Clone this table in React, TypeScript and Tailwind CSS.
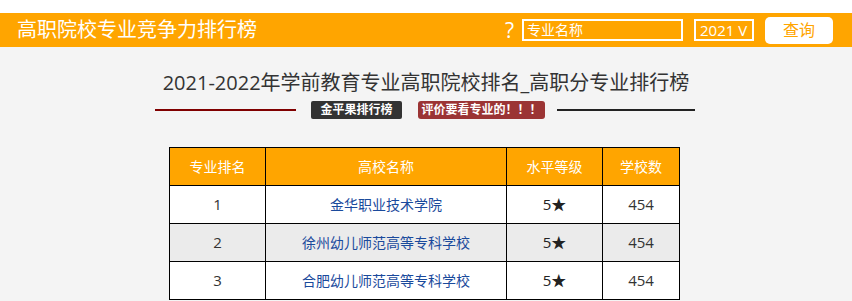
import React from "react";

const rows = [
  { rank: "1", name: "金华职业技术学院", level: "5★", count: "454" },
  { rank: "2", name: "徐州幼儿师范高等专科学校", level: "5★", count: "454" },
  { rank: "3", name: "合肥幼儿师范高等专科学校", level: "5★", count: "454" },
];

export default function App() {
  return (
    <div
      className="w-[852px] min-h-[301px] bg-[#f4f4f4] overflow-hidden"
      style={{ fontFamily: '"Open Sans", "Noto Sans CJK SC", sans-serif' }}
    >
      <div className="h-[13px] bg-white" />
      <div className="h-[34px] bg-[#ffa500] flex items-center pl-[17px] pr-[19px]">
        <div className="text-[20px] leading-[28px] text-white">高职院校专业竞争力排行榜</div>
        <div className="ml-auto flex items-center">
          <span className="text-[21px] leading-[22px] text-white mr-[8px]">?</span>
          <div className="w-[161px] h-[22px] border-2 border-white flex items-center pl-[3px] text-[14px] leading-[18px] text-white">
            专业名称
          </div>
          <div className="ml-[11px] w-[60px] h-[22px] border-2 border-white flex items-center pl-[4px] text-[15px] leading-[18px] text-white">
            2021 V
          </div>
          <div className="ml-[11px] w-[68px] h-[27px] bg-white rounded-[5px] flex items-center justify-center text-[16px] text-[#ffa500]">
            查询
          </div>
        </div>
      </div>

      <div className="mt-[22px] text-center text-[20px] leading-[28px] text-[#333]">
        2021-2022年学前教育专业高职院校排名_高职分专业排行榜
      </div>

      <div className="mt-[4px] flex items-center pl-[155px]">
        <div className="w-[141px] h-[2px] bg-[#800000]" />
        <div className="ml-[15px] w-[91px] h-[18px] bg-[#333] rounded-[2px] flex items-center justify-center text-[12px] font-bold text-white">
          金平果排行榜
        </div>
        <div className="ml-[16px] w-[127px] h-[18px] bg-[#9b3434] rounded-[3px] flex items-center justify-center text-[12px] font-bold text-white whitespace-nowrap">
          评价要看专业的！！！
        </div>
        <div className="ml-[12px] w-[138px] h-[2px] bg-[#222]" />
      </div>

      <div className="mt-[28px] pl-[169px]">
        <table className="border-collapse text-[14px]">
          <thead>
            <tr className="bg-[#ffa500] text-white h-[38px]">
              <th className="w-[96px] border border-black font-normal">专业排名</th>
              <th className="w-[241px] border border-black font-normal">高校名称</th>
              <th className="w-[96px] border border-black font-normal">水平等级</th>
              <th className="w-[77px] border border-black font-normal">学校数</th>
            </tr>
          </thead>
          <tbody>
            {rows.map((r, i) => (
              <tr key={r.rank} className={`h-[38px] ${i === 1 ? "bg-[#ebebeb]" : "bg-white"}`}>
                <td className="border border-black text-center text-[15px] text-[#333]">{r.rank}</td>
                <td className="border border-black text-center text-[#1a4a9c]">{r.name}</td>
                <td className="border border-black text-center text-[15px] text-[#222]">{r.level}</td>
                <td className="border border-black text-center text-[15px] text-[#333]">{r.count}</td>
              </tr>
            ))}
          </tbody>
        </table>
      </div>
    </div>
  );
}
